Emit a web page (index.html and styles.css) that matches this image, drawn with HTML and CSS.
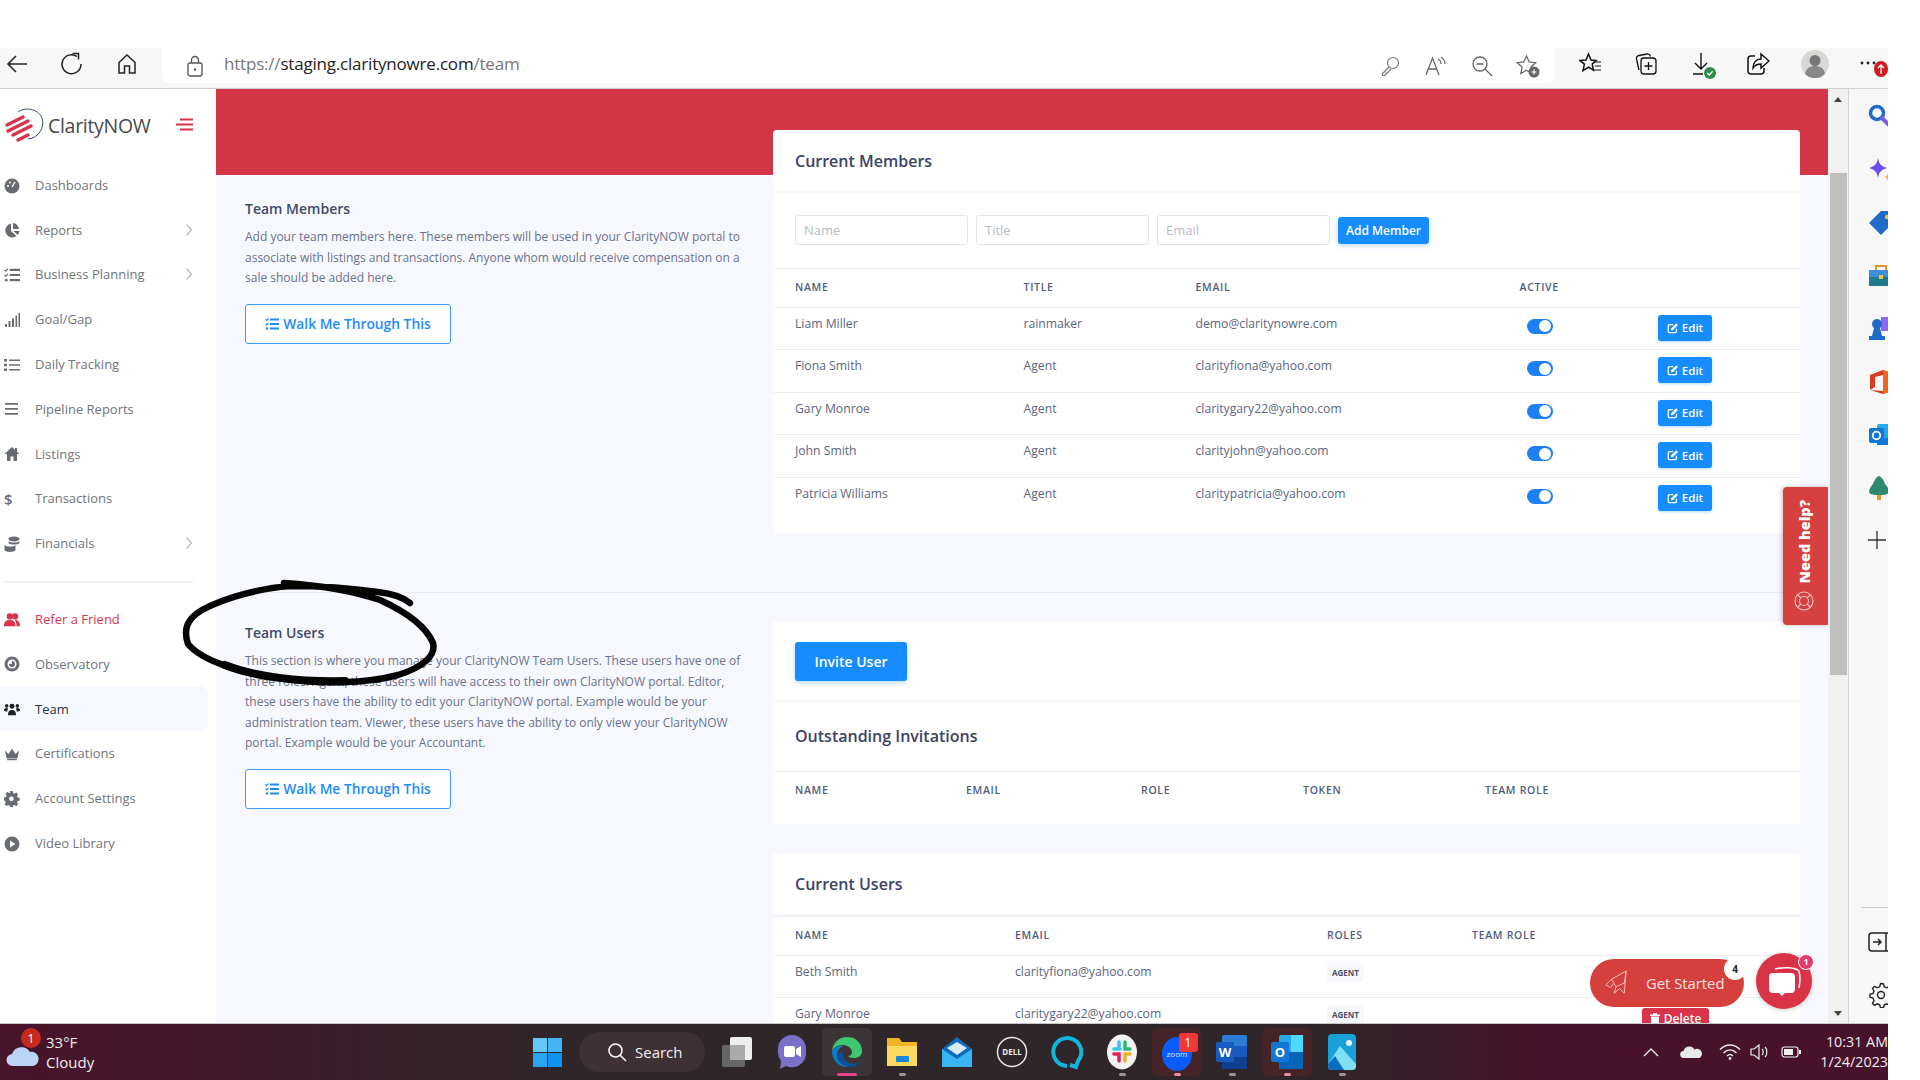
FILE: index.html
```html
<!DOCTYPE html>
<html lang="en">
<head>
  <meta charset="UTF-8" />
  <title>ClarityNOW - Team</title>
  <link rel="stylesheet" href="styles.css">
</head>
<body>
<svg class="defs" width="0" height="0">
  <symbol id="i-edit" viewBox="0 0 14 14"><path d="M11 8v3.2A1.3 1.3 0 0 1 9.700 12.500H2.800A1.300 1.300 0 0 1 1.500 11.200V4.300A1.300 1.300 0 0 1 2.800 3H7" fill="none" stroke="currentColor" stroke-width="1.500"/><path d="M5 7.300 10.800 1.500l2 2L7 9.300l-2.400.4z" fill="currentColor"/></symbol>
  <symbol id="i-tasks" viewBox="0 0 14 12"><path d="M5 1.500h9M5 6h9M5 10.500h9" stroke="currentColor" stroke-width="1.800"/><path d="M.5 1.500l1 1 2-2M.5 6l1 1 2-2" fill="none" stroke="currentColor" stroke-width="1.100"/><circle cx="2" cy="10.500" r="1.200" fill="currentColor"/></symbol>
  <symbol id="i-chev" viewBox="0 0 8 14"><path d="M1.500 1.500 6.500 7l-5 5.500" fill="none" stroke="currentColor" stroke-width="1.200"/></symbol>
</svg>

<div class="window">
  <div class="top-gap"></div>

  <header class="toolbar">
    <div class="tool-nav">
      <svg class="tool" width="24" height="24" viewBox="0 0 24 24"><path d="M22 12H3M11 4l-8 8 8 8" fill="none" stroke="#222" stroke-width="1.500"/></svg>
      <svg class="tool" width="24" height="24" viewBox="0 0 24 24"><path d="M17 4.500A9.500 9.500 0 1 0 21 12" fill="none" stroke="#222" stroke-width="1.500"/><path d="M12.500 1.500h6v6" fill="none" stroke="#222" stroke-width="1.500"/></svg>
      <svg class="tool" width="24" height="24" viewBox="0 0 24 24"><path d="M12 3l8 7.500V21h-5.500v-7h-5v7H4V10.500z" fill="none" stroke="#222" stroke-width="1.500"/></svg>
    </div>
    <div class="address">
      <svg class="lock" width="18" height="22" viewBox="0 0 18 22"><rect x="2" y="8" width="14" height="13" rx="2" fill="none" stroke="#555" stroke-width="1.300"/><path d="M5.500 8V5a3.500 3.500 0 0 1 7 0v3" fill="none" stroke="#555" stroke-width="1.300"/><circle cx="9" cy="14.500" r="1.200" fill="#555"/></svg>
      <span class="url"><span class="url-dim">https://</span>staging.claritynowre.com<span class="url-dim">/team</span></span>
      <div class="addr-tools">
        <svg width="22" height="22" viewBox="0 0 22 22"><circle cx="14" cy="8" r="5.500" fill="none" stroke="#777" stroke-width="1.200"/><path d="M10 12 3.500 18.500v2h2.500l1-1v-1.500h1.500L12 14" fill="none" stroke="#777" stroke-width="1.200"/></svg>
        <svg width="24" height="22" viewBox="0 0 24 22"><path d="M2 20 8.500 3l6.500 17M4.500 14h8" fill="none" stroke="#666" stroke-width="1.300"/><path d="M14 4c2 1 3 3 3 5M17 2c2.500 1.500 4 4 4 7" fill="none" stroke="#666" stroke-width="1.100"/></svg>
        <svg width="22" height="22" viewBox="0 0 22 22"><circle cx="9" cy="9" r="7" fill="none" stroke="#666" stroke-width="1.300"/><path d="M14 14l7 7M5.500 9h7" fill="none" stroke="#666" stroke-width="1.300"/></svg>
        <svg width="24" height="24" viewBox="0 0 24 24"><path d="M10.500 2l2.700 6 6.500.7-4.800 4.400 1.300 6.400-5.700-3.300-5.700 3.300 1.300-6.400L1.300 8.700 7.800 8z" fill="none" stroke="#666" stroke-width="1.300"/><circle cx="18" cy="18" r="5.500" fill="#666"/><path d="M18 15.500v5M15.500 18h5" stroke="#fff" stroke-width="1.200"/></svg>
      </div>
    </div>
    <div class="tool-right">
      <svg width="24" height="24" viewBox="0 0 24 24"><path d="M9.500 2l2.500 6 5 .5-3.800 3.600 1.200 6-4.900-3-5.500 3.500 1.400-6.500L1 8.500 7 8z" fill="none" stroke="#111" stroke-width="1.500"/><path d="M16 10h6M16 14h6M14 18h8" stroke="#111" stroke-width="1.200"/></svg>
      <svg width="24" height="24" viewBox="0 0 24 24"><path d="M5 18 2.500 7A3 3 0 0 1 5 3.500L13 2a3 3 0 0 1 3.500 2.500" fill="none" stroke="#111" stroke-width="1.300"/><rect x="7" y="6" width="15" height="16" rx="3" fill="none" stroke="#111" stroke-width="1.300"/><path d="M14.500 10v8M10.500 14h8" stroke="#111" stroke-width="1.300"/></svg>
      <svg class="tool-download" width="26" height="28" viewBox="0 0 26 28"><path d="M9 1v16M3 11l6 6 6-6M1 22h10" fill="none" stroke="#111" stroke-width="1.400"/><circle cx="18" cy="21" r="6" fill="#2e8b45"/><path d="M15.200 21l2 2 3.500-3.800" fill="none" stroke="#fff" stroke-width="1.300"/></svg>
      <svg width="24" height="24" viewBox="0 0 24 24"><path d="M9 4H5a3 3 0 0 0-3 3v12a3 3 0 0 0 3 3h10a3 3 0 0 0 3-3v-3" fill="none" stroke="#111" stroke-width="1.500"/><path d="M15 2l8 7-8 7v-4c-4 0-6 1-8 4 0-5 3-9 8-9z" fill="none" stroke="#111" stroke-width="1.500"/></svg>
      <svg class="avatar" width="28" height="28" viewBox="0 0 28 28"><circle cx="14" cy="14" r="14" fill="#d8d8d4"/><circle cx="14" cy="10.500" r="5.500" fill="#777"/><path d="M4 24c1-6 5-8 10-8s9 2 10 8a14 14 0 0 1-20 0z" fill="#888"/></svg>
      <div class="more">
        <svg width="16" height="4" viewBox="0 0 16 4" class="more-dots"><circle cx="2" cy="2" r="1.400" fill="#222"/><circle cx="8" cy="2" r="1.400" fill="#222"/><circle cx="14" cy="2" r="1.400" fill="#222"/></svg>
        <svg class="more-badge" width="14" height="16" viewBox="0 0 14 16"><ellipse cx="7" cy="8" rx="7" ry="8" fill="#d01c1f"/><path d="M7 13V4M4 7l3-3 3 3" fill="none" stroke="#fff" stroke-width="1.300"/></svg>
      </div>
    </div>
  </header>

  <div class="browser-body">
    <aside class="sidebar">
      <div class="brand">
        <svg class="logo" width="42" height="34" viewBox="0 0 42 34"><path d="M14 4C20-1 34 0 38 10c3 9-3 20-14 21" fill="none" stroke="#33507a" stroke-width="1"/><path d="M3 17 19 9M4 23 24 13M9 27 27 18M14 32l10-5" stroke="#d5354a" stroke-width="3.400" stroke-linecap="round"/></svg>
        <span class="brand-name">ClarityNOW</span>
        <svg class="burger" width="18" height="14" viewBox="0 0 18 14"><path d="M4 1.500h13M0 6.500h17M4 11.500h13" stroke="#d5354a" stroke-width="2.200"/></svg>
      </div>
      <nav class="nav">
        <a class="nav-item"><svg class="nav-ico" viewBox="0 0 16 16"><circle cx="8" cy="8" r="7.500" fill="currentColor"/><path d="M8 9 11 4" stroke="#fff" stroke-width="1.400"/><circle cx="4" cy="8" r="1" fill="#fff"/><circle cx="6" cy="4.500" r="1" fill="#fff"/></svg>Dashboards</a>
        <a class="nav-item"><svg class="nav-ico" viewBox="0 0 16 16"><path d="M7 1.500V9l5.500 5A7 7 0 1 1 7 1.500z" fill="currentColor"/><path d="M9 1a6.500 6.500 0 0 1 6 6H9zM9.500 9H15.500a7 7 0 0 1-2 4z" fill="currentColor"/></svg>Reports<svg class="nav-chev"><use href="#i-chev"/></svg></a>
        <a class="nav-item"><svg class="nav-ico" viewBox="0 0 14 12"><use href="#i-tasks"/></svg>Business Planning<svg class="nav-chev"><use href="#i-chev"/></svg></a>
        <a class="nav-item"><svg class="nav-ico" viewBox="0 0 16 16"><path d="M1 12h2v3H1zM4.500 9h2v6h-2zM8 6.500h2V15H8zM11.500 3.500h1.600V15h-1.600zM14.500 1H16v14h-1.500z" fill="currentColor"/></svg>Goal/Gap</a>
        <a class="nav-item"><svg class="nav-ico" viewBox="0 0 16 12"><path d="M0 0h3v2.500H0zM0 4.800h3v2.500H0zM0 9.500h3V12H0zM5 .5h11v1.600H5zM5 5.200h11v1.600H5zM5 10h11v1.600H5z" fill="currentColor"/></svg>Daily Tracking</a>
        <a class="nav-item"><svg class="nav-ico" viewBox="0 0 16 12"><path d="M1 0h13v1.700H1zM1 5h13v1.700H1zM1 10h13v1.700H1z" fill="currentColor"/></svg>Pipeline Reports</a>
        <a class="nav-item"><svg class="nav-ico" viewBox="0 0 16 16"><path d="M8 1 .5 8H3v7h3.500v-4.500h3V15H13V8h2.500L13 5.600V2h-2v1.700z" fill="currentColor"/></svg>Listings</a>
        <a class="nav-item"><span class="nav-ico nav-dollar">$</span>Transactions</a>
        <a class="nav-item"><svg class="nav-ico" viewBox="0 0 16 16"><ellipse cx="10" cy="3" rx="5.500" ry="2.500" fill="currentColor"/><path d="M4.500 5c1 2 10 2 11 0v2c-1 2-10 2-11 0zM.5 9c2 2 10 2 11 0v5c-1 2.500-10 2.500-11 0z" fill="currentColor"/></svg>Financials<svg class="nav-chev"><use href="#i-chev"/></svg></a>
      </nav>
      <div class="nav-rule"></div>
      <nav class="nav">
        <a class="nav-item nav-refer"><svg class="nav-ico" viewBox="0 0 18 16"><circle cx="6.500" cy="4" r="3.500" fill="currentColor"/><circle cx="12.500" cy="4" r="3.500" fill="currentColor"/><path d="M0 15c0-6 3-7 6.500-7s6.500 1 6.500 7zM14 15c0-3-.5-5-2-7 4 0 6 2 6 7z" fill="currentColor"/></svg>Refer a Friend</a>
        <a class="nav-item"><svg class="nav-ico" viewBox="0 0 16 16"><circle cx="8" cy="8" r="7.500" fill="currentColor"/><circle cx="8" cy="8" r="4.500" fill="#fff"/><path d="M8 5a3 3 0 1 1-3 3h3z" fill="currentColor"/></svg>Observatory</a>
        <a class="nav-item nav-active"><svg class="nav-ico" viewBox="0 0 18 14"><circle cx="9" cy="4" r="2.800" fill="currentColor"/><circle cx="3" cy="3.500" r="2" fill="currentColor"/><circle cx="15" cy="3.500" r="2" fill="currentColor"/><path d="M4.500 14c0-5 2-6 4.500-6s4.500 1 4.500 6zM0 9c0-2 1-3 3-3 .8 0 1.300.3 1.800.7C4 8 3.500 9 3.300 10zM18 9c0-2-1-3-3-3-.8 0-1.300.3-1.800.7.800 1.300 1.300 2.300 1.500 3.300z" fill="currentColor"/></svg>Team</a>
        <a class="nav-item"><svg class="nav-ico" viewBox="0 0 18 14"><path d="M1 3l4 4 4-6 4 6 4-4-2 9H3zM3.500 12.500h11V14h-11z" fill="currentColor"/></svg>Certifications</a>
        <a class="nav-item"><svg class="nav-ico" viewBox="0 0 16 16"><path d="M6.500 0h3l.4 2.200 1.600.7 1.900-1.300 2 2.100-1.300 1.800.7 1.700 2.200.3v3l-2.200.4-.7 1.600 1.300 1.900-2 2-1.900-1.300-1.600.7-.4 2.200h-3l-.4-2.200-1.600-.7-1.900 1.300-2-2 1.300-1.900-.7-1.600L0 10V7l2.200-.4.700-1.700-1.300-1.800 2-2.100 1.900 1.300 1.600-.7z" transform="scale(.92)" fill="currentColor"/><circle cx="7.400" cy="7.800" r="2.300" fill="#fff"/></svg>Account Settings</a>
        <a class="nav-item"><svg class="nav-ico" viewBox="0 0 16 16"><circle cx="8" cy="8" r="7.500" fill="currentColor"/><path d="M6 4.500 11.500 8 6 11.500z" fill="#fff"/></svg>Video Library</a>
      </nav>
    </aside>

    <main class="content">
      <div class="split split-members">
        <section class="intro intro-first">
          <h3 class="intro-title">Team Members</h3>
          <p class="intro-text">Add your team members here. These members will be used in your ClarityNOW portal to associate with listings and transactions. Anyone whom would receive compensation on a sale should be added here.</p>
          <button class="btn-walk"><svg class="walk-ico"><use href="#i-tasks"/></svg>Walk Me Through This</button>
        </section>

        <section class="card card-members">
          <h3 class="card-title">Current Members</h3>
          <div class="member-form">
            <input class="field" placeholder="Name">
            <input class="field" placeholder="Title">
            <input class="field" placeholder="Email">
            <button class="btn-add">Add Member</button>
          </div>
          <div class="row row-head cols-members"><span>Name</span><span>Title</span><span>Email</span><span>Active</span><span></span></div>
          <div class="row cols-members"><span>Liam Miller</span><span>rainmaker</span><span>demo@claritynowre.com</span><span class="toggle"></span><button class="btn-edit"><svg><use href="#i-edit"/></svg>Edit</button></div>
          <div class="row cols-members"><span>Fiona Smith</span><span>Agent</span><span>clarityfiona@yahoo.com</span><span class="toggle"></span><button class="btn-edit"><svg><use href="#i-edit"/></svg>Edit</button></div>
          <div class="row cols-members"><span>Gary Monroe</span><span>Agent</span><span>claritygary22@yahoo.com</span><span class="toggle"></span><button class="btn-edit"><svg><use href="#i-edit"/></svg>Edit</button></div>
          <div class="row cols-members"><span>John Smith</span><span>Agent</span><span>clarityjohn@yahoo.com</span><span class="toggle"></span><button class="btn-edit"><svg><use href="#i-edit"/></svg>Edit</button></div>
          <div class="row cols-members"><span>Patricia Williams</span><span>Agent</span><span>claritypatricia@yahoo.com</span><span class="toggle"></span><button class="btn-edit"><svg><use href="#i-edit"/></svg>Edit</button></div>
        </section>
      </div>

      <hr class="divider">

      <div class="split">
        <section class="intro intro-second">
          <h3 class="intro-title">Team Users</h3>
          <p class="intro-text">This section is where you manage your ClarityNOW Team Users. These users have one of three roles. Agent, these users will have access to their own ClarityNOW portal. Editor, these users have the ability to edit your ClarityNOW portal. Example would be your administration team. Viewer, these users have the ability to only view your ClarityNOW portal. Example would be your Accountant.</p>
          <button class="btn-walk"><svg class="walk-ico"><use href="#i-tasks"/></svg>Walk Me Through This</button>
        </section>

        <div class="card-stack">
          <section class="card card-invites">
            <div class="invite-bar"><button class="btn-invite">Invite User</button></div>
            <h3 class="card-title card-title-big">Outstanding Invitations</h3>
            <div class="row row-head cols-invites"><span>Name</span><span>Email</span><span>Role</span><span>Token</span><span>Team Role</span></div>
          </section>

          <section class="card">
            <h3 class="card-title">Current Users</h3>
            <div class="row row-head cols-users"><span>Name</span><span>Email</span><span>Roles</span><span>Team Role</span></div>
            <div class="row cols-users"><span>Beth Smith</span><span>clarityfiona@yahoo.com</span><span class="role-cell"><span class="role">Agent</span></span><span></span></div>
            <div class="row cols-users"><span>Gary Monroe</span><span>claritygary22@yahoo.com</span><span class="role-cell"><span class="role">Agent</span></span><span></span><button class="btn-delete"><svg width="10" height="11" viewBox="0 0 10 11"><path d="M0 1.500h10V3H0zM3 0h4v1.500H3zM1 3.500h8V11H1z" fill="#fff"/></svg>Delete</button></div>
          </section>
        </div>
      </div>

      <div class="help-tab">
        <span class="help-text">Need help?</span>
        <svg class="help-ico" width="20" height="20" viewBox="0 0 20 20"><g fill="none" stroke="#f3c4c3" stroke-width="1.100"><circle cx="10" cy="10" r="9"/><circle cx="10" cy="10" r="4.500"/><path d="M3.500 3.500l3.300 3.300M16.500 3.500l-3.300 3.300M3.500 16.500l3.300-3.300M16.500 16.500l-3.300-3.300"/></g></svg>
      </div>

      <div class="get-started">
        <svg width="24" height="28" viewBox="0 0 26 30"><g fill="none" stroke="#f4c6c2" stroke-width="1"><path d="M24 2 8 11l5 8 9-4z"/><path d="M24 2l-2 24-5-5M8 11l-6 6 5 3 3-4M13 19l-2 7 6-5"/></g></svg>
        <span>Get Started</span>
        <b class="gs-count">4</b>
      </div>
      <div class="chat-bubble">
        <svg width="34" height="34" viewBox="0 0 34 34"><path d="M8 5c8-2 20-2 24 2 1 4 1 12 0 17" fill="none" stroke="#fff" stroke-width="1.500"/><path d="M6 9h18a4 4 0 0 1 4 4v12a4 4 0 0 1-4 4h-6l-3 3-3-3H6a4 4 0 0 1-4-4V13a4 4 0 0 1 4-4z" fill="#fff"/></svg>
        <b class="chat-count">1</b>
      </div>
    </main>

    <div class="scrollbar">
      <span class="arrow-up"></span>
      <span class="thumb"></span>
      <span class="arrow-down"></span>
    </div>

    <aside class="side-panel">
      <svg width="26" height="26" viewBox="0 0 26 26"><circle cx="9" cy="9" r="6.500" fill="#fff" stroke="#1f6cc8" stroke-width="3.500"/><path d="M14 14l9 9" stroke="#7a5ae0" stroke-width="4" stroke-linecap="round"/></svg>
      <svg width="26" height="26" viewBox="0 0 26 26"><path d="M10 1c1 6 3 8 9 10-6 2-8 4-9 10-1-6-3-8-9-10 6-2 8-4 9-10z" fill="#6a4ff0"/><path d="M20 16c.5 2.500 1.500 3.500 4 4-2.500.5-3.500 1.500-4 4-.5-2.500-1.500-3.500-4-4 2.500-.5 3.500-1.500 4-4z" fill="#f5b63b"/></svg>
      <svg width="26" height="26" viewBox="0 0 26 26"><path d="M1 13 13 1h12v12L13 25z" fill="#1f6cc8"/><circle cx="19" cy="7" r="2.200" fill="#f5c33b"/></svg>
      <svg width="26" height="26" viewBox="0 0 26 26"><rect x="1" y="7" width="24" height="16" fill="#1f7a8c"/><rect x="1" y="7" width="24" height="7" fill="#3a8fd8"/><path d="M8 7V3h10v4" fill="none" stroke="#e2942f" stroke-width="2"/><rect x="11" y="12" width="4" height="4" fill="#f5c33b"/></svg>
      <svg width="26" height="26" viewBox="0 0 26 26"><rect x="13" y="1" width="13" height="14" fill="#8a6af0"/><circle cx="9" cy="8" r="5" fill="#1f6cc8"/><path d="M6 12h6l2 8h3v4H1v-4h3z" fill="#1f6cc8"/></svg>
      <svg width="26" height="26" viewBox="0 0 26 26"><path d="M2 6 15 1l9 3v18l-9 3-13-4 13 1V6L7 8v10l-5 3z" fill="#d83b1f"/><path d="M15 1l9 3v18l-9 3z" fill="#ea6a1f"/></svg>
      <svg width="26" height="26" viewBox="0 0 26 26"><rect x="9" y="2" width="17" height="21" rx="2" fill="#28a8ea"/><path d="M9 12l8 5 9-5v11H9z" fill="#0f78d4"/><rect x="1" y="6" width="15" height="15" rx="2" fill="#0f78d4"/><circle cx="8.500" cy="13.500" r="3.800" fill="none" stroke="#fff" stroke-width="1.800"/></svg>
      <svg width="26" height="26" viewBox="0 0 26 26"><path d="M11 1c3 1 5 5 6 8 2 2 4 5 4 8-1 3-5 3-10 3S2 20 1 17c0-3 2-6 4-8 1-3 3-7 6-8z" fill="#2e8a6e"/><rect x="9" y="20" width="4" height="5" fill="#e09a2c"/></svg>
      <svg class="panel-plus" width="24" height="24" viewBox="0 0 24 24"><path d="M12 3v18M3 12h18" stroke="#333" stroke-width="1.300"/></svg>
      <div class="panel-bottom">
        <div class="panel-rule"></div>
        <svg width="26" height="22" viewBox="0 0 26 22"><rect x="1" y="2" width="30" height="18" rx="3" fill="none" stroke="#222" stroke-width="1.500"/><path d="M18 2v18M5 11h8M10 8l3 3-3 3" fill="none" stroke="#222" stroke-width="1.500"/></svg>
        <svg width="26" height="26" viewBox="0 0 26 26"><path d="M13 1.500l2.500.3.800 3 2.500 1 2.700-1.500 2 2-1.500 2.700 1 2.500 3 .8v3l-3 .8-1 2.500 1.500 2.700-2 2-2.700-1.500-2.500 1-.8 3h-3l-.8-3-2.500-1-2.700 1.500-2-2 1.500-2.700-1-2.500-3-.8v-3l3-.8 1-2.500-1.500-2.700 2-2 2.700 1.500 2.500-1 .8-3z" fill="none" stroke="#222" stroke-width="1.400"/><circle cx="13" cy="13" r="3.500" fill="none" stroke="#222" stroke-width="1.400"/></svg>
      </div>
    </aside>

    <!-- marker circle drawn over the screenshot -->
    <svg class="ink" width="280" height="120" viewBox="176 576 280 120">
      <path d="M410 603C404 598 395 594 378 592 350 588 320 586 290 586 262 588 226 597 202 610 187 619 183 629 188 644 202 661 240 673 286 679 320 684 365 684 398 675 424 667 436 655 433 643 426 626 404 611 380 600 350 590 315 585 284 583" fill="none" stroke="#050505" stroke-width="6.500" stroke-linecap="round"/>
      <path d="M225 665C255 677 300 682 345 681" fill="none" stroke="#050505" stroke-width="8" stroke-linecap="round"/>
    </svg>
  </div>

  <footer class="taskbar">
    <div class="weather">
      <span class="weather-ico">
        <svg width="34" height="24" viewBox="0 0 34 24"><path d="M7 23a6 6 0 0 1-1-12 10 10 0 0 1 18-2 7 7 0 0 1 3 14z" fill="#bcd4f5"/></svg>
        <b class="weather-count">1</b>
      </span>
      <div class="weather-text"><span>33°F</span><span>Cloudy</span></div>
    </div>
    <div class="tb-start">
      <svg width="29" height="29" viewBox="0 0 29 29"><path d="M0 0h14v14H0z" fill="#63c7f7"/><path d="M15 0h14v14H15z" fill="#43b4f5"/><path d="M0 15h14v14H0z" fill="#27a5f2"/><path d="M15 15h14v14H15z" fill="#1293ee"/></svg>
    </div>
    <div class="tb-search">
      <svg width="20" height="20" viewBox="0 0 20 20"><circle cx="8.500" cy="8.500" r="6.500" fill="none" stroke="#fff" stroke-width="1.500"/><path d="M13 13l6 6" stroke="#fff" stroke-width="1.500"/></svg>
      Search
    </div>
    <div class="tb-app"><svg width="32" height="32" viewBox="0 0 32 32"><rect x="1" y="9" width="23" height="22" rx="2" fill="#666"/><rect x="9" y="1" width="22" height="23" rx="2" fill="#eee"/><rect x="9" y="9" width="15" height="15" fill="#aaa"/></svg></div>
    <div class="tb-app"><svg width="30" height="36" viewBox="0 0 30 36"><path d="M15 1a14 14 0 0 1 14 14v5a14 14 0 0 1-20 12l-6 3 1-8a14 14 0 0 1-3-8v-4A14 14 0 0 1 15 1z" fill="#7b70c9"/><rect x="7" y="12" width="11" height="11" rx="2" fill="#fff"/><path d="M19 15l5-3v11l-5-3z" fill="#fff"/></svg></div>
    <div class="tb-app tb-edge"><svg width="32" height="32" viewBox="0 0 32 32"><path d="M16 1c9 0 15 6 15 14 0 5-4 7-8 7-3 0-5-1-6-2 2 0 4-1 4-4 0-4-5-7-9-7C6 9 2 12 1 15 2 7 8 1 16 1z" fill="#3fc66e"/><path d="M1 15c2-4 7-6 11-5-4 2-6 5-6 9 0 6 5 11 13 12-1 0-2 0-3 0C8 31 1 24 1 15z" fill="#0c7ec8"/><path d="M6 19c0 6 5 11 13 12 4 0 8-2 10-5-3 2-10 3-14-1-3-2-4-5-3-8-3-1-5-1-6 2z" fill="#0a4f9c"/></svg></div>
    <div class="tb-app tb-run"><svg width="32" height="32" viewBox="0 0 32 32"><path d="M1 2h12l3 4h15v24H1z" fill="#f0b429"/><path d="M1 10h30v20H1z" fill="#fbd85e"/><rect x="10" y="20" width="13" height="6" rx="1" fill="#1a86d8"/></svg></div>
    <div class="tb-app"><svg width="32" height="32" viewBox="0 0 32 32"><path d="M16 1l15 12v18H1V13z" fill="#0f6cbd"/><path d="M1 13l15 10 15-10v18H1z" fill="#3ab4f2"/><path d="M6 12 16 6l10 6-10 7z" fill="#d8ecfb"/></svg></div>
    <div class="tb-app"><svg width="32" height="32" viewBox="0 0 32 32"><circle cx="16" cy="16" r="14.500" fill="none" stroke="#e8e8e8" stroke-width="1.500"/><text x="16" y="19" class="dell-text">DELL</text></svg></div>
    <div class="tb-app"><svg width="32" height="36" viewBox="0 0 32 36"><path d="M16 32A14 14 0 1 1 27 27l-2 6-6-2" fill="none" stroke="#12b6dc" stroke-width="4"/></svg></div>
    <div class="tb-app tb-run"><svg width="30" height="36" viewBox="0 0 30 36"><ellipse cx="15" cy="18" rx="15" ry="17.500" fill="#f3f3f3"/><path d="M12 8v7M7 15h6" stroke="#36c5f0" stroke-width="3.500" stroke-linecap="round"/><path d="M18 8v7h5" stroke="#2eb67d" stroke-width="3.500" stroke-linecap="round" fill="none"/><path d="M7 20h5v7" stroke="#e01e5a" stroke-width="3.500" stroke-linecap="round" fill="none"/><path d="M18 27v-7h5" stroke="#ecb22e" stroke-width="3.500" stroke-linecap="round" fill="none"/></svg></div>
    <div class="tb-app tb-hot"><svg width="32" height="40" viewBox="0 0 32 40"><ellipse cx="16" cy="22" rx="15" ry="17" fill="#0b5cff"/><text x="16" y="25" class="zoom-text">zoom</text></svg><b class="tb-count">1</b></div>
    <div class="tb-app tb-run"><svg width="32" height="36" viewBox="0 0 32 36"><rect x="6" y="1" width="25" height="34" rx="2" fill="#2b7cd3"/><rect x="6" y="12" width="25" height="11" fill="#185abd"/><rect x="6" y="23" width="25" height="12" fill="#103f91"/><rect x="0" y="8" width="18" height="20" rx="2" fill="#185abd"/><text x="9" y="23" class="word-text">W</text></svg></div>
    <div class="tb-app tb-hot"><svg width="32" height="36" viewBox="0 0 32 36"><rect x="8" y="1" width="24" height="34" rx="2" fill="#28a8ea"/><rect x="20" y="1" width="12" height="17" fill="#50d9ff"/><path d="M8 18h24v17H8z" fill="#0364b8"/><rect x="0" y="8" width="18" height="20" rx="2" fill="#0f78d4"/><text x="9" y="23" class="word-text">O</text></svg></div>
    <div class="tb-app tb-run"><svg width="28" height="36" viewBox="0 0 28 36"><rect width="28" height="36" rx="4" fill="#1aa0d8"/><path d="M0 30 12 12l16 18v2a4 4 0 0 1-4 4H4a4 4 0 0 1-4-4z" fill="#7fe0f5"/><path d="M0 30l7-8 9 14H4a4 4 0 0 1-4-4z" fill="#0c6fbd"/><circle cx="21" cy="9" r="3" fill="#eaf8fd"/></svg></div>

    <div class="tray">
      <svg width="16" height="10" viewBox="0 0 16 10"><path d="M1 9l7-7 7 7" fill="none" stroke="#eee" stroke-width="1.300"/></svg>
      <svg class="tray-cloud" width="22" height="14" viewBox="0 0 22 14"><path d="M4 13a3.500 3.500 0 0 1-.5-7 6 6 0 0 1 11-1.500 4.500 4.500 0 0 1 5 8.500z" fill="#e8e8e8"/></svg>
      <svg class="tray-wifi" width="22" height="16" viewBox="0 0 22 16"><path d="M1 5.500c6-6 14-6 20 0M4.500 9c4-4 9-4 13 0M8 12c2-2 4-2 6 0" fill="none" stroke="#eee" stroke-width="1.500"/><circle cx="11" cy="14.500" r="1.400" fill="#eee"/></svg>
      <svg class="tray-vol" width="20" height="16" viewBox="0 0 20 16"><path d="M1 5h3l5-4v14l-5-4H1z" fill="none" stroke="#eee" stroke-width="1.200"/><path d="M12 5c1.500 1.500 1.500 4.500 0 6M15 3c2.500 2.500 2.500 7.500 0 10" fill="none" stroke="#eee" stroke-width="1.200"/></svg>
      <svg class="tray-bat" width="20" height="12" viewBox="0 0 20 12"><rect x="1" y="1" width="16" height="10" rx="2.500" fill="none" stroke="#eee" stroke-width="1.200"/><rect x="3" y="3" width="9" height="6" fill="#eee"/><rect x="18" y="4" width="2" height="4" fill="#eee"/></svg>
      <div class="clock"><span>10:31 AM</span><span>1/24/2023</span></div>
    </div>
  </footer>
</div>
</body>
</html>
```

FILE: styles.css
```css
* {
  box-sizing: border-box;
}

html, body {
  margin: 0;
  height: 100%;
  background: #fff;
  overflow: hidden;
}

body {
  font-family: "Open Sans", "Noto Sans", sans-serif;
  font-size: 12.200px;
  color: #5d6580;
}

.defs {
  position: absolute;
}

.window {
  width: 1888px;
  height: 1080px;
  display: flex;
  flex-direction: column;
  overflow: hidden;
}

.top-gap {
  height: 48px;
  flex: none;
}

/* browser toolbar */
.toolbar {
  height: 41px;
  flex: none;
  display: flex;
  background: #f7f7f7;
  border-bottom: 1px solid #d0d0d0;
}

.tool-nav {
  width: 162px;
  display: flex;
  align-items: flex-start;
  padding: 4px 0 0 5px;
  gap: 31px;
}

.address {
  width: 1393px;
  height: 35px;
  background: #fff;
  border-radius: 0 0 8px 8px;
  display: flex;
  align-items: center;
  padding-left: 24px;
}

.url {
  margin: -5px 0 0 20px;
  font-size: 17px;
  color: #222;
  letter-spacing: -0.200px;
}

.url-dim {
  color: #777;
}

.addr-tools {
  margin-left: auto;
  display: flex;
  align-items: center;
  gap: 23px;
  padding-right: 15px;
}

.tool-right {
  flex: 1;
  display: flex;
  align-items: flex-start;
  padding: 4px 0 0 24px;
  gap: 31px;
  position: relative;
}

.tool-download {
  margin: 0 -3px 0 3px;
}

.avatar {
  margin-top: -2px;
}

.more {
  position: relative;
  width: 24px;
  height: 24px;
}

.more-dots {
  position: absolute;
  left: 0;
  top: 9px;
}

.more-badge {
  position: absolute;
  left: 14px;
  top: 9px;
}

/* page under the toolbar */
.browser-body {
  flex: 1;
  min-height: 0;
  display: flex;
  position: relative;
}

.sidebar {
  width: 216px;
  flex: none;
  background: #fff;
}

.brand {
  height: 73.500px;
  display: flex;
  align-items: center;
  padding-left: 4px;
  padding-bottom: 1px;
}

.brand-name {
  font-size: 19.500px;
  color: #46494f;
  margin-left: 2px;
  letter-spacing: -0.300px;
}

.burger {
  margin-left: 25px;
}

.nav-item {
  height: 44.800px;
  display: flex;
  align-items: center;
  font-size: 13px;
  color: #6f747c;
  position: relative;
  padding-left: 35px;
  margin-right: 8px;
}

.nav-ico {
  position: absolute;
  left: 4px;
  top: 15px;
  width: 16px;
  height: 16px;
  color: #686c72;
}

.nav-dollar {
  font-size: 15px;
  font-weight: 600;
  line-height: 16px;
}

.nav-chev {
  width: 8px;
  height: 14px;
  color: #b4b8bd;
  margin-left: auto;
  margin-right: 15px;
}

.nav-rule {
  height: 2px;
  background: #f1f2f4;
  margin: 15px 23px 14px 5px;
}

.nav-refer, .nav-refer .nav-ico {
  color: #d9344a;
}

.nav-active {
  background: #f5f8fc;
  border-radius: 0 8px 8px 0;
  color: #2c3344;
}

.nav-active .nav-ico {
  color: #222;
}

/* main column */
.content {
  width: 1612px;
  flex: none;
  position: relative;
  overflow: hidden;
  background: linear-gradient(#d23546 86px, #f7f8fd 86px);
  padding: 41px 28px 0 29px;
}

.split {
  display: grid;
  grid-template-columns: 528px 1027px;
  align-items: start;
}

.intro-first {
  padding-top: 69px;
}

.intro-second {
  padding-top: 1px;
}

.intro {
  padding-right: 20px;
}

.intro-title {
  margin: 0 0 8px;
  font-size: 14px;
  line-height: 20px;
  font-weight: 600;
  color: #41496b;
}

.intro-text {
  margin: 0 0 15px;
  line-height: 20.500px;
  font-size: 12px;
  color: #69718c;
}

.btn-walk {
  width: 206px;
  height: 40px;
  display: flex;
  align-items: center;
  justify-content: center;
  gap: 4px;
  background: #fff;
  border: 1.500px solid #3f9bff;
  border-radius: 3px;
  color: #1c8cff;
  font: 600 13.800px "Open Sans", sans-serif;
  padding: 0;
}

.walk-ico {
  width: 14px;
  height: 12px;
}

.card {
  background: #fff;
  border-radius: 4px 4px 0 0;
}

.card-members {
  height: 403px;
}

.card-stack {
  display: flex;
  flex-direction: column;
  gap: 29px;
}

.card-title {
  margin: 0;
  height: 63px;
  padding: 0 22px;
  display: flex;
  align-items: center;
  border-bottom: 2px solid #f5f6f9;
  font-size: 16px;
  font-weight: 600;
  color: #3c4365;
}

.member-form {
  height: 75px;
  display: flex;
  align-items: center;
  gap: 8px;
  padding: 0 22px;
  padding-bottom: 1px;
}

.field {
  width: 173px;
  height: 30px;
  border: 1px solid #e1e5ea;
  border-radius: 3px;
  padding: 0 8px;
  font: 13px "Open Sans", sans-serif;
  background: #fff;
}

.field::placeholder {
  color: #b8bcc6;
}

.btn-add {
  width: 91px;
  height: 27px;
  background: #168dff;
  border: 0;
  border-radius: 3px;
  color: #fff;
  font: 600 12px "Open Sans", sans-serif;
  box-shadow: 0 2px 5px rgba(22, 141, 255, .3);
  padding: 0;
}

.row {
  display: grid;
  height: 42.600px;
  border-top: 1px solid #eceef3;
  padding: 6px 0 0 22px;
  line-height: 20px;
  color: #5d6580;
  position: relative;
}

.row-head {
  height: 38.500px;
  padding-top: 8px;
  font-size: 10.500px;
  font-weight: 600;
  text-transform: uppercase;
  letter-spacing: 0.700px;
  color: #525d7e;
}

.cols-members {
  grid-template-columns: 228.500px 172px 324px 138.500px 60px;
}

.cols-invites {
  grid-template-columns: 171px 175px 162px 182px 120px;
}

.cols-users {
  grid-template-columns: 220px 312px 145px 120px;
}

.toggle {
  width: 26px;
  height: 15px;
  margin: 5px 0 0 7px;
  background: #1d80f5;
  border-radius: 8px;
  position: relative;
}

.toggle::after {
  content: "";
  position: absolute;
  right: 2px;
  top: 1.500px;
  width: 12px;
  height: 12px;
  background: #fff;
  border-radius: 50%;
}

.btn-edit {
  width: 54px;
  height: 26px;
  margin-top: 1px;
  display: flex;
  align-items: center;
  justify-content: center;
  gap: 3px;
  background: #168dff;
  border: 0;
  border-radius: 3px;
  color: #fff;
  font: 600 11.500px "Open Sans", sans-serif;
  box-shadow: 0 1px 3px rgba(22, 141, 255, .35);
  padding: 0;
}

.btn-edit svg {
  width: 12px;
  height: 12px;
}

.divider {
  margin: 59px 0 29px 0;
  border: 0;
  border-top: 1px solid #e9eaef;
}

.invite-bar {
  height: 79px;
  padding: 20px 22px 0;
  border-bottom: 1px solid #eef0f4;
}

.btn-invite {
  width: 112px;
  height: 39px;
  background: #168dff;
  border: 0;
  border-radius: 3px;
  color: #fff;
  font: 600 14px "Open Sans", sans-serif;
  box-shadow: 0 2px 5px rgba(22, 141, 255, .3);
  padding: 0;
}

.card-title-big {
  height: 70px;
  border-bottom: 0;
  font-size: 16px;
}

.card-invites {
  height: 202px;
  border-radius: 0;
}

.role-cell {
  display: block;
}

.role {
  display: inline-block;
  width: 37px;
  height: 19px;
  margin-top: 1px;
  line-height: 19px;
  text-align: center;
  background: #f6f8fb;
  border-radius: 3px;
  font-size: 8px;
  font-weight: 700;
  text-transform: uppercase;
  color: #4b5166;
}

.btn-delete {
  position: absolute;
  left: 869px;
  top: 10px;
  width: 67px;
  height: 27px;
  display: flex;
  align-items: flex-start;
  justify-content: center;
  gap: 4px;
  padding: 2px 0 0;
  background: #d9344a;
  border: 0;
  border-radius: 3px;
  color: #fff;
  font: 600 12px "Open Sans", sans-serif;
}

.btn-delete svg {
  margin-top: 3px;
}

/* things that float over the page */
.ink {
  position: absolute;
  left: 176px;
  top: 487px;
}

.help-tab {
  position: absolute;
  left: 1567px;
  top: 398px;
  width: 45px;
  height: 138px;
  background: #d6403f;
  border-radius: 4px 0 0 4px;
  box-shadow: -1px 0 4px rgba(0, 0, 0, .25);
  display: flex;
  flex-direction: column;
  align-items: center;
  justify-content: flex-end;
  gap: 8px;
  padding: 0 3px 14px 0;
}

.help-text {
  writing-mode: vertical-rl;
  transform: rotate(180deg);
  font: 800 14.500px "Open Sans", sans-serif;
  color: #fff;
}

.get-started {
  position: absolute;
  left: 1374px;
  top: 870px;
  width: 154px;
  height: 48px;
  display: flex;
  align-items: center;
  background: #d6403c;
  border-radius: 24px;
  padding-left: 14px;
  color: #f8e3e1;
  font-size: 14.800px;
  gap: 18px;
}

.gs-count {
  position: absolute;
  right: -2px;
  top: -1px;
  width: 22px;
  height: 22px;
  line-height: 22px;
  text-align: center;
  border-radius: 50%;
  background: #fff;
  color: #222;
  font-size: 10px;
}

.chat-bubble {
  position: absolute;
  left: 1540px;
  top: 864px;
  width: 56px;
  height: 56px;
  border-radius: 50%;
  background: #d93346;
  display: flex;
  align-items: center;
  justify-content: center;
  box-shadow: 0 1px 5px rgba(0, 0, 0, .2);
}

.chat-count {
  position: absolute;
  right: -2px;
  top: 1px;
  width: 16px;
  height: 16px;
  line-height: 14px;
  text-align: center;
  border-radius: 50%;
  border: 1px solid #fff;
  background: #e8386b;
  color: #fff;
  font-size: 9px;
}

/* scrollbar and edge panel */
.scrollbar {
  width: 20px;
  flex: none;
  background: #f1f1f1;
  display: flex;
  flex-direction: column;
  align-items: center;
  padding: 8px 0 7px;
}

.arrow-up, .arrow-down {
  width: 0;
  height: 0;
  border-left: 4.500px solid transparent;
  border-right: 4.500px solid transparent;
}

.arrow-up {
  border-bottom: 5px solid #444;
}

.arrow-down {
  border-top: 5px solid #444;
  margin-top: auto;
}

.thumb {
  width: 17px;
  height: 502px;
  margin-top: 71px;
  background: #bfbfbf;
}

.side-panel {
  width: 40px;
  flex: none;
  background: #f7f7f7;
  border-left: 1px solid #d4d4d4;
  display: flex;
  flex-direction: column;
  align-items: flex-start;
  padding: 15px 0 15px 19px;
  gap: 27px;
  overflow: hidden;
}

.side-panel svg {
  flex: none;
}

.panel-plus {
  margin-left: -3px;
}

.panel-bottom {
  margin-top: auto;
  display: flex;
  flex-direction: column;
  gap: 29px;
  align-items: flex-start;
}

.panel-rule {
  width: 30px;
  height: 1px;
  margin: 0 0 -6px -6px;
  background: #ccc;
}

/* windows taskbar */
.taskbar {
  height: 57px;
  flex: none;
  display: flex;
  align-items: center;
  border-top: 1px solid #c9c6c7;
  background: linear-gradient(90deg, #481429 0, #43182a 180px, #2f2629 560px, #2f2629 1320px, #47122a 1560px, #47122a 100%);
  color: #f0eef0;
}

.weather {
  width: 532px;
  flex: none;
  display: flex;
  align-items: center;
  padding-left: 6px;
  align-self: stretch;
}

.weather-ico {
  position: relative;
  width: 34px;
  height: 24px;
  margin-top: 6px;
}

.weather-count {
  position: absolute;
  left: 15px;
  top: -15px;
  width: 20px;
  height: 20px;
  line-height: 20px;
  border-radius: 50%;
  background: #c42b1c;
  color: #fff;
  text-align: center;
  font-size: 13px;
  font-weight: 400;
}

.weather-text {
  display: flex;
  flex-direction: column;
  margin-left: 6px;
  font-size: 15px;
  line-height: 20px;
}

.tb-start {
  width: 31px;
  display: flex;
  justify-content: center;
  margin-right: 16px;
}

.tb-search {
  width: 126px;
  height: 40px;
  margin-right: 4px;
  border-radius: 20px;
  background: #3d3135;
  display: flex;
  align-items: center;
  gap: 8px;
  padding-left: 28px;
  font-size: 15px;
  color: #f4f2f3;
}

.tb-app {
  width: 55px;
  height: 48px;
  flex: none;
  display: flex;
  align-items: center;
  justify-content: center;
  position: relative;
  border-radius: 5px;
}

.tb-run::after, .tb-hot::after, .tb-edge::after {
  content: "";
  position: absolute;
  bottom: 0;
  left: 50%;
  width: 7px;
  height: 3px;
  margin-left: -3px;
  border-radius: 2px;
  background: #9a9698;
}

.tb-edge {
  background: #3c3537;
  margin: 0 2.500px;
  width: 50px;
}

.tb-edge::after {
  width: 20px;
  margin-left: -10px;
  background: #e8438d;
}

.tb-hot {
  background: #452326;
  margin: 0 2.500px;
  width: 50px;
}

.tb-hot::after {
  background: #f48a9b;
}

.tb-count {
  position: absolute;
  top: 5px;
  right: 4px;
  width: 19px;
  height: 19px;
  line-height: 19px;
  text-align: center;
  background: #f0383a;
  border-radius: 3px;
  color: #fff;
  font-size: 12px;
  font-weight: 400;
}

.dell-text {
  font: 700 8px "Open Sans", sans-serif;
  fill: #eee;
  text-anchor: middle;
}

.zoom-text {
  font: 8px "Open Sans", sans-serif;
  fill: #dfe9ff;
  text-anchor: middle;
}

.word-text {
  font: 700 13px "Open Sans", sans-serif;
  fill: #fff;
  text-anchor: middle;
}

.tray {
  margin-left: auto;
  display: flex;
  align-items: center;
  height: 100%;
}

.tray-cloud {
  margin-left: 21px;
}

.tray-wifi {
  margin-left: 17px;
}

.tray-vol {
  margin-left: 9px;
}

.tray-bat {
  margin-left: 11px;
}

.clock {
  display: flex;
  flex-direction: column;
  align-items: flex-end;
  margin-left: 20px;
  width: 67px;
  font-size: 14.300px;
  line-height: 20px;
  white-space: nowrap;
}
```
